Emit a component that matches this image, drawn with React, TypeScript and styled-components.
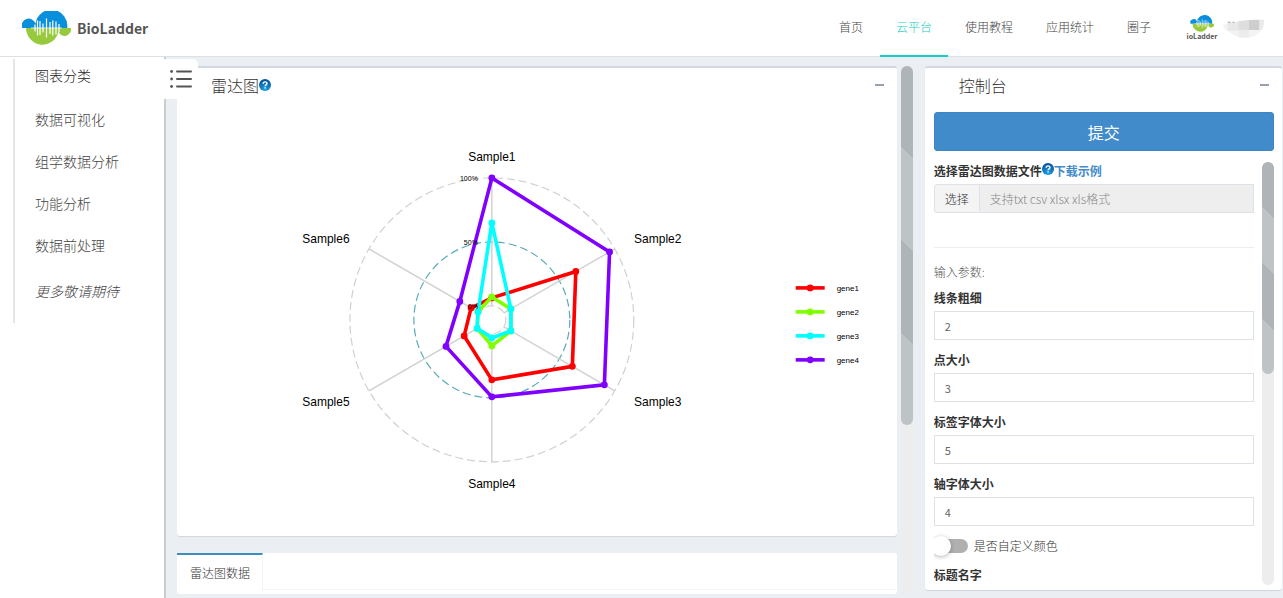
import React, { useId, useState } from "react";
import styled, { createGlobalStyle, css } from "styled-components";

const GlobalStyle = createGlobalStyle`
  *, *::before, *::after { box-sizing: border-box; }
  body {
    margin: 0;
    background: #ebeff4;
    color: #333;
    font: 300 12px/18px "Noto Sans CJK SC", sans-serif;
  }
  button, input { font: inherit; color: inherit; }
`;

const Page = styled.div`
  display: flex;
  flex-direction: column;
  height: 100vh;
  overflow: hidden;
`;

/* Header */

const Header = styled.header`
  display: flex;
  align-items: stretch;
  justify-content: space-between;
  flex: none;
  height: 57px;
  padding: 0 18px 0 22px;
  background: #fff;
  border-bottom: 1px solid #dde1e4;
`;

const Brand = styled.a`
  display: flex;
  align-items: center;
  gap: 6px;
  color: #555;
  font-size: 14px;
  font-weight: 700;
  text-decoration: none;
`;

const TopNav = styled.nav`
  display: flex;
  align-items: stretch;
  gap: 1px;
`;

const TopLink = styled.a<{ $active?: boolean }>`
  display: flex;
  align-items: center;
  height: 57px;
  padding: 0 16px 2px;
  color: ${(p) => (p.$active ? "#13cec4" : "#444")};
  border-bottom: 2px solid ${(p) => (p.$active ? "#13cec4" : "transparent")};
  text-decoration: none;
`;

const Account = styled.a`
  display: flex;
  align-items: center;
  gap: 5px;
  margin-left: 18px;
`;

/* Body */

const Body = styled.div`
  display: flex;
  flex: 1;
  min-height: 0;
`;

const Sidebar = styled.aside`
  position: relative;
  flex: none;
  width: 166px;
  padding: 2px 0 0 13px;
  background: #fff;
  border-right: 2px solid #c8cdd0;
`;

const SideMenu = styled.nav`
  display: flex;
  flex-direction: column;
  padding: 0 0 11px 20px;
  border-left: 2px solid #e6e6e6;
  font-size: 14px;
`;

const SideTitle = styled.h2`
  margin: 0 0 7px;
  font-size: 14px;
  font-weight: 300;
  line-height: 32px;
  color: #222;
`;

const SideLink = styled.a`
  line-height: 42px;
  color: #444;
  text-decoration: none;
`;

const SideNote = styled.em`
  padding-top: 4px;
  line-height: 42px;
  color: #444;
`;

const MenuToggle = styled.button`
  position: absolute;
  top: 2px;
  left: 164px;
  display: flex;
  align-items: center;
  justify-content: center;
  width: 34px;
  height: 40px;
  padding: 0;
  background: #fff;
  border: 0;
  border-radius: 0 5px 0 0;
`;

const Content = styled.main`
  display: grid;
  grid-template-columns: 2fr 1fr;
  flex: 1;
  min-width: 0;
  padding: 9px 1px 0 11px;
`;

const ResultColumn = styled.div`
  display: flex;
  gap: 4px;
  min-width: 0;
  min-height: 0;
  padding: 0 1px 4px 0;
`;

const ResultList = styled.div`
  display: flex;
  flex-direction: column;
  flex: 1;
  gap: 17px;
  min-width: 0;
  overflow: hidden;
`;

const ConsoleColumn = styled.div`
  display: flex;
  min-width: 0;
  min-height: 0;
  padding: 0 0 8px 11px;
`;

const Panel = styled.section<{ $fill?: boolean }>`
  display: flex;
  flex-direction: column;
  flex: ${(p) => (p.$fill ? "1" : "none")};
  min-width: 0;
  background: #fff;
  border-top: 2px solid #d2d6de;
  border-radius: 3px;
  box-shadow: 0 1px 1px rgba(0, 0, 0, 0.1);
`;

const PanelHeader = styled.header`
  display: flex;
  align-items: center;
  height: 32px;
  padding: 1px 13px 0 34px;
`;

const PanelTitle = styled.h3`
  display: flex;
  align-items: center;
  margin: 0;
  font-size: 16px;
  font-weight: 300;
`;

const CollapseButton = styled.button`
  display: flex;
  margin-left: auto;
  padding: 0;
  background: none;
  border: 0;
`;

const Chart = styled.svg`
  display: block;
  width: 100%;
  height: auto;
  font-family: "Liberation Sans", Arial, sans-serif;
  font-weight: 400;
`;

const Track = styled.div`
  flex: none;
  width: 12px;
  background: #ededed;
  border-radius: 6px;
`;

const Thumb = styled.div<{ $share: number }>`
  height: ${(p) => p.$share}%;
  border-radius: 6px;
  background: #aeb4b8
    linear-gradient(
      45deg,
      rgba(255, 255, 255, 0.2) 25%,
      transparent 25%,
      transparent 50%,
      rgba(255, 255, 255, 0.2) 50%,
      rgba(255, 255, 255, 0.2) 75%,
      transparent 75%
    );
`;

/* Data tabs */

const TabPanel = styled.section`
  flex: 1 0 41px;
  background: #fff;
  border-radius: 3px;
`;

const TabBar = styled.div`
  display: flex;
  height: 37px;
  border-bottom: 1px solid #f4f4f4;
`;

const Tab = styled.button`
  height: 38px;
  padding: 0 12px 0 13px;
  background: #fff;
  border: 0;
  border-top: 2px solid #3c8dbc;
  border-right: 1px solid #f4f4f4;
`;

/* Console */

const ConsoleBody = styled.form`
  display: flex;
  flex-direction: column;
  flex: 1;
  gap: 11px;
  min-height: 0;
  padding: 12px 8px 5px 9px;
`;

const SubmitButton = styled.button`
  flex: none;
  height: 39px;
  color: #fff;
  font-size: 16px;
  font-weight: 400;
  background: #428bca;
  border: 1px solid #3d86c5;
  border-radius: 3px;
`;

const ScrollRow = styled.div`
  display: flex;
  flex: 1;
  gap: 8px;
  min-height: 0;
`;

const Fields = styled.div`
  display: flex;
  flex-direction: column;
  flex: 1;
  gap: 11px;
  min-width: 0;
  overflow: hidden;
`;

const Field = styled.div`
  display: flex;
  flex-direction: column;
  flex: none;
  gap: 4px;
`;

const LabelRow = styled.div`
  display: flex;
  height: 18px;
`;

const Label = styled.label`
  font-weight: 700;
  line-height: 18px;
  color: #333;
`;

const SampleLink = styled.a`
  font-weight: 700;
  color: #428bca;
  text-decoration: none;
`;

const inputBox = css`
  height: 29px;
  padding: 0 10px;
  border: 1px solid #dfe1e6;
  border-radius: 0;
  outline: 0;
`;

const TextInput = styled.input`
  ${inputBox}
  width: 100%;
  font-size: 11px;
  font-weight: 400;
  color: #666;
  background: #fff;
`;

const FileRow = styled.div`
  display: flex;
`;

const FileButton = styled.button`
  ${inputBox}
  flex: none;
  background: #f4f4f4;
  border-radius: 3px 0 0 3px;
`;

const FileName = styled.input`
  ${inputBox}
  flex: 1;
  min-width: 0;
  background: #eee;
  border-left: 0;
  &::placeholder { color: #888; opacity: 1; }
`;

const ParamsHeading = styled.p`
  flex: none;
  margin: 23px 0 -3px;
  padding-top: 15px;
  color: #555;
  border-top: 1px solid #eee;
`;

const SwitchLabel = styled.label`
  display: flex;
  align-items: center;
  flex: none;
  gap: 6px;
  height: 18px;
`;

const Switch = styled.input`
  appearance: none;
  display: flex;
  align-items: center;
  width: 34px;
  height: 14px;
  margin: 0;
  background: #b0b0b0;
  border-radius: 7px;
  &::before {
    content: "";
    width: 20px;
    height: 20px;
    margin-left: -3px;
    background: #fff;
    border-radius: 50%;
    box-shadow: 0 1px 4px rgba(0, 0, 0, 0.3);
  }
  &:checked { justify-content: flex-end; background: #428bca; }
`;

/* Drawings */

/* Horizontal position and length of each bar of the wave */
const bars: [number, number][] = [
  [13, 7], [15.5, 15], [18, 14], [21, 9], [24.5, 19],
  [28, 12], [30.8, 15], [34, 13], [37, 8],
];

function LogoShapes() {
  return (
    <>
      <path d="M0 17A6.8 6.8 0 0 1 13.500 12.500A16 16 0 0 1 45.200 17Z" fill="#0a8fdc" />
      <path d="M4 17A16.500 17.500 0 0 0 36.500 20.500A6.500 7 0 0 0 49 17Z" fill="#97c93c" />
      <path
        d={bars.map(([x, h]) => `M${x} ${17 - h / 2}v${h}`).join("")}
        stroke="#fff"
        strokeWidth="1.2"
      />
      <path d="M9 17h31" stroke="#fff" strokeWidth="0.8" />
    </>
  );
}

function HelpIcon() {
  return (
    <svg width="12" height="14" viewBox="0 0 12 14" role="img" aria-label="帮助">
      <defs>
        <radialGradient id="helpFill" cx="50%" cy="85%" r="80%">
          <stop offset="0" stopColor="#1fa4e8" />
          <stop offset="1" stopColor="#04539c" />
        </radialGradient>
      </defs>
      <circle cx="6" cy="7" r="6" fill="url(#helpFill)" />
      <path
        d="M4.200 5.700c0-2.400 3.800-2.300 3.800-.2 0 1.400-1.900 1.300-1.900 2.700M6.100 9.300v1.300"
        fill="none"
        stroke="#fff"
        strokeWidth="1.4"
      />
    </svg>
  );
}

function MinusIcon() {
  return (
    <svg width="9" height="10" viewBox="0 0 9 10" aria-hidden="true">
      <path d="M0 5h9" stroke="#97a0b3" strokeWidth="2" />
    </svg>
  );
}

function ListIcon() {
  return (
    <svg width="22" height="18" viewBox="0 0 22 18" fill="#555" aria-hidden="true">
      {[1.5, 9, 16.5].map((y) => (
        <g key={y}>
          <circle cx="1.6" cy={y} r="1.4" />
          <rect x="6" y={y - 1} width="16" height="2" rx="1" />
        </g>
      ))}
    </svg>
  );
}

function Avatar() {
  return (
    <svg width="32" height="30" viewBox="0 0 32 30" role="img" aria-label="BioLadder">
      <g transform="translate(4.500 2.500) scale(.48)">
        <LogoShapes />
      </g>
      <text x="16" y="26" textAnchor="middle" fill="#555" fontSize="7" fontWeight="700">
        ioLadder
      </text>
    </svg>
  );
}

function MaskedName() {
  return (
    <svg width="42" height="24" viewBox="0 0 44 24" aria-hidden="true">
      <defs>
        <clipPath id="nameShape">
          <path d="M0 10C1 7 8 7 16 5C26 3 36 3 43 3C43 11 40 18 31 21C22 24 12 21 8 17C4 15 1 14 0 10Z" />
        </clipPath>
      </defs>
      <g clipPath="url(#nameShape)">
        <path d="M0 0h44v24H0z" fill="#f3f3f3" />
        <path d="M5 6h11v9H5z" fill="#e8e8e8" />
        <path d="M16 4h11v11H16z" fill="#dedede" />
        <path d="M27 3h11v11H27z" fill="#cecece" />
        <path d="M16 14h11v9H16z" fill="#ececec" />
        <path d="M38 3h6v11h-6z" fill="#e9e9e9" />
      </g>
      <path d="M5 6h3M10 6h2" stroke="#999" strokeWidth="1" />
    </svg>
  );
}

const CX = 315;
const CY = 220;

const samples = [
  { name: "Sample1", x: 315, y: 61 },
  { name: "Sample2", x: 481, y: 143 },
  { name: "Sample3", x: 481, y: 306 },
  { name: "Sample4", x: 315, y: 388 },
  { name: "Sample5", x: 149, y: 306 },
  { name: "Sample6", x: 149, y: 143 },
];

/* Distance from the centre on each of the six axes */
const series = [
  { name: "gene1", color: "#ff0000", r: [22, 97, 93, 60, 32, 24] },
  { name: "gene2", color: "#80ff00", r: [23, 22, 22, 26, 17, 16] },
  { name: "gene3", color: "#00ffff", r: [97, 22, 22, 18, 17, 16] },
  { name: "gene4", color: "#8000ff", r: [142, 136, 130, 77, 53, 37] },
];

const rings = [
  { label: "0%", r: 14, color: "#d0d0d0" },
  { label: "50%", r: 78, color: "#5aabb8" },
  { label: "100%", r: 142, color: "#d0d0d0" },
];

function polar(r: number, axis: number) {
  const a = (axis * Math.PI) / 3;
  return { x: CX + r * Math.sin(a), y: CY - r * Math.cos(a) };
}

function RadarChart() {
  return (
    <Chart viewBox="0 0 720 436" role="img" aria-label="雷达图">
      {rings.map((ring) => (
        <circle
          key={ring.label}
          cx={CX}
          cy={CY}
          r={ring.r}
          fill="none"
          stroke={ring.color}
          strokeWidth="1.2"
          strokeDasharray="8 4"
        />
      ))}
      {samples.map((s, i) => {
        const from = polar(14, i);
        const to = polar(142, i);
        return (
          <line
            key={s.name}
            x1={from.x}
            y1={from.y}
            x2={to.x}
            y2={to.y}
            stroke="#cfcfcf"
            strokeWidth="1.4"
          />
        );
      })}
      {series.map((s) => {
        const pts = s.r.map(polar);
        return (
          <g key={s.name} fill={s.color}>
            <polygon
              points={pts.map((p) => `${p.x},${p.y}`).join(" ")}
              fill="none"
              stroke={s.color}
              strokeWidth="3.6"
            />
            {pts.map((p, i) => (
              <circle key={i} cx={p.x} cy={p.y} r="3.4" />
            ))}
          </g>
        );
      })}
      {rings.map((ring) => (
        <text key={ring.label} x="301" y={CY - ring.r + 3} textAnchor="end" fontSize="7">
          {ring.label}
        </text>
      ))}
      {samples.map((s) => (
        <text key={s.name} x={s.x} y={s.y} textAnchor="middle" fontSize="12">
          {s.name}
        </text>
      ))}
      {series.map((s, i) => (
        <g key={s.name} transform={`translate(619 ${188 + i * 24})`}>
          <line x2="29" stroke={s.color} strokeWidth="3.6" />
          <circle cx="14.5" r="3.4" fill={s.color} />
          <text x="41" y="3" fontSize="8">
            {s.name}
          </text>
        </g>
      ))}
    </Chart>
  );
}

function NumberField({ label, initial }: { label: string; initial: string }) {
  const id = useId();
  const [value, setValue] = useState(initial);
  return (
    <Field>
      <Label htmlFor={id}>{label}</Label>
      <TextInput id={id} value={value} onChange={(e) => setValue(e.target.value)} />
    </Field>
  );
}

const topLinks = ["首页", "云平台", "使用教程", "应用统计", "圈子"];
const categories = ["数据可视化", "组学数据分析", "功能分析", "数据前处理"];

export default function App() {
  return (
    <Page>
      <GlobalStyle />
      <Header>
        <Brand href="#">
          <svg width="49" height="35" viewBox="0 0 49 35" fill="none" aria-hidden="true">
            <LogoShapes />
          </svg>
          BioLadder
        </Brand>
        <TopNav>
          {topLinks.map((text) => (
            <TopLink key={text} href="#" $active={text === "云平台"}>
              {text}
            </TopLink>
          ))}
          <Account href="#">
            <Avatar />
            <MaskedName />
          </Account>
        </TopNav>
      </Header>
      <Body>
        <Sidebar>
          <SideMenu>
            <SideTitle>图表分类</SideTitle>
            {categories.map((text) => (
              <SideLink key={text} href="#">
                {text}
              </SideLink>
            ))}
            <SideNote>更多敬请期待</SideNote>
          </SideMenu>
          <MenuToggle type="button" aria-label="切换菜单">
            <ListIcon />
          </MenuToggle>
        </Sidebar>
        <Content>
          <ResultColumn>
            <ResultList>
              <Panel>
                <PanelHeader>
                  <PanelTitle>
                    雷达图
                    <HelpIcon />
                  </PanelTitle>
                  <CollapseButton type="button" aria-label="收起">
                    <MinusIcon />
                  </CollapseButton>
                </PanelHeader>
                <RadarChart />
              </Panel>
              <TabPanel>
                <TabBar role="tablist">
                  <Tab type="button" role="tab" aria-selected="true">
                    雷达图数据
                  </Tab>
                </TabBar>
              </TabPanel>
            </ResultList>
            <Track>
              <Thumb $share={68} />
            </Track>
          </ResultColumn>
          <ConsoleColumn>
            <Panel $fill>
              <PanelHeader>
                <PanelTitle>控制台</PanelTitle>
                <CollapseButton type="button" aria-label="收起">
                  <MinusIcon />
                </CollapseButton>
              </PanelHeader>
              <ConsoleBody onSubmit={(e) => e.preventDefault()}>
                <SubmitButton type="submit">提交</SubmitButton>
                <ScrollRow>
                  <Fields>
                    <Field>
                      <LabelRow>
                        <Label htmlFor="data-file">选择雷达图数据文件</Label>
                        <HelpIcon />
                        <SampleLink href="#">下载示例</SampleLink>
                      </LabelRow>
                      <FileRow>
                        <FileButton type="button">选择</FileButton>
                        <FileName
                          id="data-file"
                          readOnly
                          placeholder="支持txt csv xlsx xls格式"
                        />
                      </FileRow>
                    </Field>
                    <ParamsHeading>输入参数:</ParamsHeading>
                    <NumberField label="线条粗细" initial="2" />
                    <NumberField label="点大小" initial="3" />
                    <NumberField label="标签字体大小" initial="5" />
                    <NumberField label="轴字体大小" initial="4" />
                    <SwitchLabel>
                      <Switch type="checkbox" />
                      是否自定义颜色
                    </SwitchLabel>
                    <NumberField label="标题名字" initial="" />
                  </Fields>
                  <Track>
                    <Thumb $share={50} />
                  </Track>
                </ScrollRow>
              </ConsoleBody>
            </Panel>
          </ConsoleColumn>
        </Content>
      </Body>
    </Page>
  );
}
